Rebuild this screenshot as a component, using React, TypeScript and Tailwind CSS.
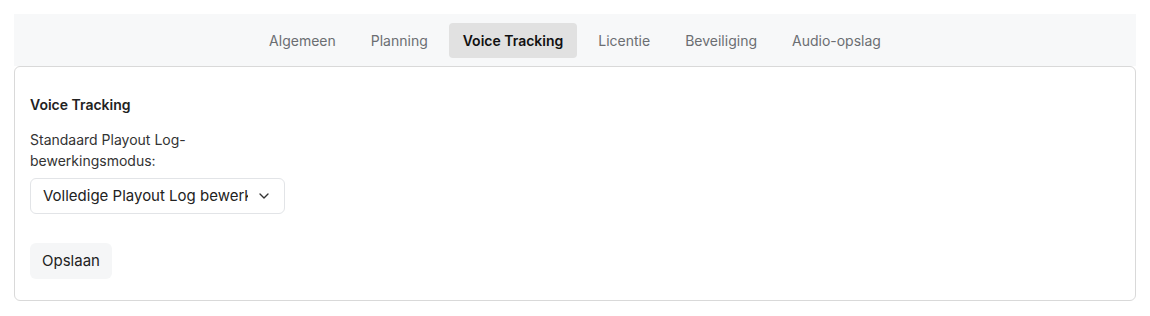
import { ChevronDown } from "lucide-react"

const tabs = ["Algemeen", "Planning", "Voice Tracking", "Licentie", "Beveiliging", "Audio-opslag"]

export default function App() {
    return (
        <div className="w-[1150px] h-[316px] bg-white p-[14px] font-['Inter',sans-serif] text-[#1f1f1f]">
            <nav className="h-[52px] bg-[#f7f8f9] flex items-center justify-center gap-[7px]">
                {tabs.map((t) =>
                    t === "Voice Tracking" ? (
                        <button
                            key={t}
                            className="h-[35px] px-[14px] rounded-[4px] bg-[#e1e1e1] text-[14px] font-semibold text-[#111]"
                        >
                            {t}
                        </button>
                    ) : (
                        <button key={t} className="h-[35px] px-[14px] text-[14px] text-[#6b6e72]">
                            {t}
                        </button>
                    )
                )}
            </nav>
            <section className="border border-[#d9d9d9] rounded-[6px] px-[15px] pt-[28px] pb-[21px] flex flex-col">
                <h2 className="text-[14px] font-semibold leading-[20px] text-[#222]">Voice Tracking</h2>
                <label className="mt-[14px] w-[200px] text-[14px] leading-[21px] text-[#333]">
                    Standaard Playout Log-bewerkingsmodus:
                </label>
                <div className="mt-[7px] w-[255px] h-[36px] border border-[#e2e4e7] rounded-[6px] flex items-center pl-[12px] pr-[12px] gap-[8px]">
                    <span className="flex-1 overflow-hidden whitespace-nowrap text-[15px] text-[#222]">
                        Volledige Playout Log bewerking
                    </span>
                    <ChevronDown size={16} strokeWidth={2} className="text-[#333] shrink-0" />
                </div>
                <button className="mt-[29px] self-start h-[36px] px-[12px] rounded-[6px] bg-[#f5f6f7] text-[15px] text-[#222]">
                    Opslaan
                </button>
            </section>
        </div>
    )
}
